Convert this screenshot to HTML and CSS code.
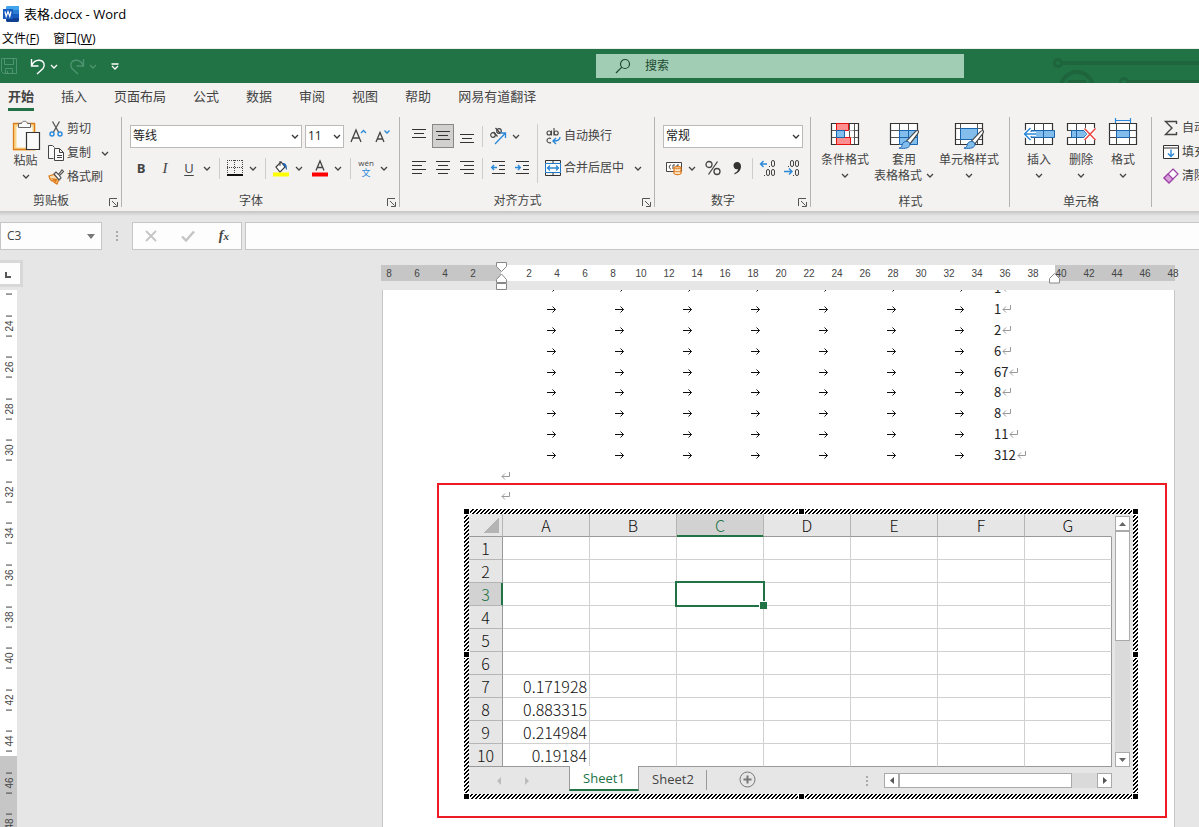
FILE: index.html
```html
<!DOCTYPE html>
<html lang="zh-CN">
<head>
<meta charset="utf-8">
<title>表格.docx - Word</title>
<link rel="stylesheet" href="styles.css">
</head>
<body>
<svg class="defs" aria-hidden="true">
  <symbol id="chev" viewBox="0 0 8 5"><path d="M1 1l3 3 3-3" fill="none" stroke="currentColor" stroke-width="1.3"/></symbol>
  <symbol id="launch" viewBox="0 0 9 9"><path d="M.5 8V.5H8M3 3l4.5 4.5M8.500 4v4.500H4" fill="none" stroke="#555"/></symbol>
  <symbol id="tab" viewBox="0 0 10 8"><path d="M0 4.500h8.500M5.500 1.500l3 3-3 3" fill="none" stroke="#111"/></symbol>
  <symbol id="ret" viewBox="0 0 10 8"><path d="M8.500 0v4.500H1M4 1.500l-3 3 3 3" fill="none" stroke="#999"/></symbol>
  <symbol id="brush" viewBox="0 0 22 22"><path d="M20.500 1c1.500 0 1 2 0 3.500L12.500 15 9 12 18 2.500C19 1.500 19.800 1 20.500 1z" fill="#fff" stroke="#444" stroke-width="1.200"/><path d="M9 12.500c2 0 3.500 1.500 3.500 3 0 3.500-4 5-11.500 4 3-.5 3-2 3.500-4C5 13.500 7 12.500 9 12.500z" fill="#83bdec" stroke="#1a66b0"/></symbol>
</svg>

<header class="titlebar">
  <svg width="16" height="16" viewBox="0 0 16 16"><path fill="#41a5ee" d="M4 0h12v4H3V1z"/><path fill="#2b7cd3" d="M3 4h13v4H3z"/><path fill="#185abd" d="M3 8h13v4H3z"/><path fill="#103f91" d="M3 12h13v3l-1 1H4l-1-1z"/><path fill="#185abd" d="M0 3h10v10H0z"/><path d="M2 5.500l1.200 5 1.800-5 1.800 5 1.200-5" fill="none" stroke="#fff" stroke-width="1.200"/></svg>
  <span>表格.docx - Word</span>
</header>
<nav class="menubar">
  <button>文件(<u>F</u>)</button>
  <button>窗口(<u>W</u>)</button>
</nav>

<div class="topbar">
  <div class="quick">
    <button class="dim" aria-label="保存"><svg width="18" height="18" viewBox="0 0 18 18" fill="none" stroke="currentColor"><path d="M1.500 1.500h15v15h-13l-2-2zM4.500 1.500v6h9v-6M5.500 16.500v-5h7v5M7.500 14v2"/></svg></button>
    <button aria-label="撤消"><svg width="16" height="17" viewBox="0 0 16 17" fill="none" stroke="currentColor" stroke-width="1.400"><path d="M1.500 1v7h7M1.500 8C3 4 6 2 9.500 2.200c4.500.5 6 5 3.500 8.300L7 16"/></svg></button>
    <button aria-label="撤消列表"><svg width="8" height="5"><use href="#chev"/></svg></button>
    <button class="dim redo" aria-label="恢复"><svg width="16" height="17" viewBox="0 0 16 17" fill="none" stroke="currentColor" stroke-width="1.400"><path d="M14.500 1v7h-7M14.500 8C13 4 10 2 6.500 2.200 2 2.700.5 7.200 3 10.500L9 16"/></svg></button>
    <button class="dim" aria-label="恢复列表"><svg width="8" height="5"><use href="#chev"/></svg></button>
    <button class="more" aria-label="自定义"><svg width="8" height="7" viewBox="0 0 8 7" fill="none" stroke="currentColor" stroke-width="1.300"><path d="M.5 1h7M1 3l3 3 3-3"/></svg></button>
  </div>
  <label class="search">
    <svg width="16" height="16" viewBox="0 0 16 16" fill="none" stroke="#1c4a30" stroke-width="1.200"><circle cx="10" cy="6" r="4.500"/><path d="M6.800 9.200L1 15"/></svg>
    <input type="text" placeholder="搜索">
  </label>
  <svg class="circuit" width="235" height="34" viewBox="0 0 235 34" fill="none" stroke="#1e653e"><circle cx="94" cy="14" r="3.500" stroke-width="3"/><path d="M98 14h137M163 33h72" stroke-width="4"/><circle cx="113" cy="39" r="16" stroke-width="4"/><path d="M104 33h18" stroke-width="4"/><circle cx="160" cy="33" r="3.500" stroke-width="3"/></svg>
</div>

<nav class="tabs">
  <button class="on">开始</button><button>插入</button><button>页面布局</button><button>公式</button><button>数据</button><button>审阅</button><button>视图</button><button>帮助</button><button>网易有道翻译</button>
</nav>

<div class="ribbon">
  <section class="group g-clip">
    <div class="body">
      <button class="big">
        <svg width="30" height="32" viewBox="0 0 30 32"><path d="M3.500 5.500h20v25h-20z" fill="#fff"/><path d="M4 5h19v24H4z" fill="#fafafa" stroke="#f8d58a" stroke-width="3"/><path d="M2.500 3.500h21v26h-21z" fill="none" stroke="#e07b1a" stroke-width="1.300"/><path d="M7.500 7.500v-4h3c.5-3 5.500-3 6 0h3v4z" fill="#fafafa" stroke="#666"/><path d="M15.500 12.500h13v17h-13z" fill="#fafafa" stroke="#333" stroke-width="1.200"/></svg>
        <span>粘贴</span><svg class="dd" width="8" height="5"><use href="#chev"/></svg>
      </button>
      <div class="stack">
        <button class="txt"><svg width="16" height="16" viewBox="0 0 16 16" fill="none"><path d="M4.500.500l6 10.500M11.500.500l-6 10.500" stroke="#555" stroke-width="1.300"/><circle cx="4" cy="13" r="2" stroke="#2b88d8" stroke-width="1.400"/><circle cx="12" cy="13" r="2" stroke="#2b88d8" stroke-width="1.400"/></svg>剪切</button>
        <button class="txt"><svg width="16" height="16" viewBox="0 0 16 16" fill="#fafafa" stroke="#444"><path d="M5.500 13.500h-5v-13h4l2 2"/><path d="M6.500 3.500h5l4 4v8h-9zM11.500 3.500v4h4M9 10.500h5M9 12.500h5"/></svg>复制<svg class="far" width="8" height="5"><use href="#chev"/></svg></button>
        <button class="txt"><svg width="16" height="16" viewBox="0 0 16 16"><path d="M1 7l5-1.500L11 10l-2 5c-2-1-3-1.500-4-3-1 0-3-1-4-5z" fill="#fbe0b4" stroke="#e07b1a" stroke-width="1.300"/><path d="M3 9l5 5 1.500-4z" fill="#e07b1a"/><path d="M6 5l2-2 2.500 2.500L14 1l1.500 1.500-4 4L13 9l-2 2z" fill="#fff" stroke="#555" stroke-width="1.200"/></svg>格式刷</button>
      </div>
    </div>
    <footer>剪贴板<button class="launch" aria-label="剪贴板选项"><svg width="9" height="9"><use href="#launch"/></svg></button></footer>
  </section>

  <section class="group g-font">
    <div class="body rows">
      <div class="row fields">
        <select class="face" aria-label="字体"><option>等线</option></select>
        <select class="size" aria-label="字号"><option>11</option></select>
        <button class="ic" aria-label="增大字号"><svg width="18" height="16" viewBox="0 0 18 16" fill="none"><path d="M1 14L6 2l5 12M2.800 10h6.400" stroke="#444" stroke-width="1.300"/><path d="M11 5l2.500-2.500L16 5" stroke="#2b88d8" stroke-width="1.300"/></svg></button>
        <button class="ic" aria-label="减小字号"><svg width="18" height="16" viewBox="0 0 18 16" fill="none"><path d="M2 14L6 4.500 10 14M3.500 11h5" stroke="#444" stroke-width="1.300"/><path d="M10.500 2.500L13 5l2.500-2.500" stroke="#2b88d8" stroke-width="1.300"/></svg></button>
      </div>
      <div class="row">
        <button class="ic b">B</button><button class="ic i">I</button><button class="ic un">U</button><button class="cv" aria-label="下划线"><svg width="8" height="5"><use href="#chev"/></svg></button>
        <i class="sep"></i>
        <button class="ic" aria-label="边框"><svg width="16" height="16" viewBox="0 0 16 16" fill="none" stroke="#444" shape-rendering="crispEdges"><path d="M0 .5h16M.5 0v14M15.500 0v14M0 7.500h16M7.500 0v14" stroke-dasharray="1 1"/><path d="M0 15h16" stroke="#111" stroke-width="2"/></svg></button><button class="cv" aria-label="边框列表"><svg width="8" height="5"><use href="#chev"/></svg></button>
        <i class="sep"></i>
        <button class="ic" aria-label="填充颜色"><svg width="16" height="17" viewBox="0 0 16 17" fill="none"><path d="M3 7l5-5 4 5-5 5z" fill="#fff" stroke="#444" stroke-width="1.200"/><path d="M7 1v5" stroke="#444"/><path d="M10 3c3 0 4 2 4 7-2-1-1-4-4-5z" fill="#1a66b0"/><path d="M0 12.500h16v4H0z" fill="#ff0"/></svg></button><button class="cv" aria-label="填充颜色列表"><svg width="8" height="5"><use href="#chev"/></svg></button>
        <button class="ic gap" aria-label="字体颜色"><svg width="16" height="17" viewBox="0 0 16 17" fill="none"><path d="M4 10.500L8 1l4 9.500M5.300 7.500h5.400" stroke="#444" stroke-width="1.300"/><path d="M0 12.500h16v4H0z" fill="#f00"/></svg></button><button class="cv" aria-label="字体颜色列表"><svg width="8" height="5"><use href="#chev"/></svg></button>
        <i class="sep"></i>
        <button class="ic pinyin"><span>wén</span><b>文</b></button><button class="cv" aria-label="拼音列表"><svg width="8" height="5"><use href="#chev"/></svg></button>
      </div>
    </div>
    <footer>字体<button class="launch" aria-label="字体选项"><svg width="9" height="9"><use href="#launch"/></svg></button></footer>
  </section>

  <section class="group g-align">
    <div class="body">
      <div class="rows">
        <div class="row">
          <button class="ic" aria-label="顶端对齐"><svg width="14" height="14" viewBox="0 0 14 14" stroke="#333"><path d="M0 .5h14M2 4.500h10M0 8.500h14"/></svg></button>
          <button class="ic on" aria-label="垂直居中"><svg width="14" height="14" viewBox="0 0 14 14" stroke="#333"><path d="M0 2.500h14M2 6.500h10M0 10.500h14"/></svg></button>
          <button class="ic" aria-label="底端对齐"><svg width="14" height="14" viewBox="0 0 14 14" stroke="#333"><path d="M0 5.500h14M2 9.500h10M0 13.500h14"/></svg></button>
          <i class="sep even"></i>
          <button class="ic" aria-label="方向"><svg width="18" height="18" viewBox="0 0 18 18" fill="none"><g stroke="#444" stroke-width="1.200"><circle cx="4" cy="8" r="2.300"/><path d="M4.500 5l4 4.500M6.500 1l4.500 5"/><circle cx="10" cy="4" r="2.300"/></g><path d="M6 17L16 6.500M11.500 6h5v5" stroke="#2b88d8" stroke-width="1.300"/></svg></button><button class="cv" aria-label="方向列表"><svg width="8" height="5"><use href="#chev"/></svg></button>
        </div>
        <div class="row">
          <button class="ic" aria-label="左对齐"><svg width="14" height="14" viewBox="0 0 14 14" stroke="#333"><path d="M0 .5h14M0 4.500h10M0 8.500h14M0 12.500h10"/></svg></button>
          <button class="ic" aria-label="居中"><svg width="14" height="14" viewBox="0 0 14 14" stroke="#333"><path d="M0 .5h14M2 4.500h10M0 8.500h14M2 12.500h10"/></svg></button>
          <button class="ic" aria-label="右对齐"><svg width="14" height="14" viewBox="0 0 14 14" stroke="#333"><path d="M0 .5h14M4 4.500h10M0 8.500h14M4 12.500h10"/></svg></button>
          <i class="sep even"></i>
          <button class="ic" aria-label="减少缩进量"><svg width="14" height="14" viewBox="0 0 14 14" fill="none" stroke="#333"><path d="M1 .5h13M8 4.500h6M8 8.500h6M1 12.500h13"/><path d="M6 6.500H.8M3 4L.7 6.500 3 9" stroke="#2b88d8" stroke-width="1.400"/></svg></button>
          <button class="ic" aria-label="增加缩进量"><svg width="14" height="14" viewBox="0 0 14 14" fill="none" stroke="#333"><path d="M1 .5h13M8 4.500h6M8 8.500h6M1 12.500h13"/><path d="M0 6.500h5.200M3 4l2.300 2.500L3 9" stroke="#2b88d8" stroke-width="1.400"/></svg></button>
        </div>
      </div>
      <i class="sep tall"></i>
      <div class="rows">
        <button class="txt"><svg width="16" height="16" viewBox="0 0 16 16" fill="none"><g stroke="#444" stroke-width="1.100"><circle cx="4" cy="5" r="2"/><path d="M6.500 2.500v5M9 0v7.500"/><circle cx="11.200" cy="5" r="2"/><path d="M6 10.500c-1.500-1-4 0-4 2s2.500 3 4 2"/></g><path d="M15 9c0 3-2 4-6.500 4M11 10l-3 3 3 3" stroke="#2b88d8" stroke-width="1.400"/></svg>自动换行</button>
        <button class="txt"><svg width="16" height="16" viewBox="0 0 16 16" fill="none"><path d="M.5 3.500v-3h15v3M8 .5v3M.5 12.500v3h15v-3M8 12.500v3" stroke="#333"/><path d="M.5 3.500h15v9H.5z" fill="#fff" stroke="#1e78c8"/><path d="M3 8h10M5 5.500L2.500 8 5 10.500M11 5.500L13.500 8 11 10.500" stroke="#2b88d8" stroke-width="1.300"/></svg>合并后居中<svg class="far" width="8" height="5"><use href="#chev"/></svg></button>
      </div>
    </div>
    <footer>对齐方式<button class="launch" aria-label="对齐选项"><svg width="9" height="9"><use href="#launch"/></svg></button></footer>
  </section>

  <section class="group g-num">
    <div class="body rows">
      <div class="row"><select class="fmt" aria-label="数字格式"><option>常规</option></select></div>
      <div class="row">
        <button class="ic" aria-label="会计数字格式"><svg width="16" height="16" viewBox="0 0 16 16" fill="none"><path d="M.5 2.500h15v9H.5z" fill="#fff" stroke="#444"/><path d="M5 5c-2-.5-2.500 4 0 4M7 9V5h2M11 7V5h2" stroke="#444"/><path d="M8 7.500c1-1.300 6-1.300 7 0v6c-1 1.500-6 1.500-7 0z" fill="#fde6c8" stroke="#e07b1a" stroke-width="1.200"/><path d="M8 8c1 1 6 1 7 0M8 11c1 1 6 1 7 0" stroke="#e07b1a"/></svg></button><button class="cv" aria-label="会计格式列表"><svg width="8" height="5"><use href="#chev"/></svg></button>
        <button class="ic gap" aria-label="百分比样式"><svg width="16" height="16" viewBox="0 0 16 16" fill="none" stroke="#444" stroke-width="1.300"><circle cx="4" cy="4.500" r="3"/><circle cx="12" cy="11.500" r="3"/><path d="M12.500 1.500l-9 13"/></svg></button>
        <button class="ic" aria-label="千位分隔样式"><svg width="10" height="14" viewBox="0 0 10 14"><path d="M5 1c2.500 0 4 1.500 4 4.500C9 9 6.500 12 2.500 13.500V12C5 11 6 9.500 6 8 3 9 1.500 6.500 1.500 4.500 1.500 2.500 3 1 5 1z" fill="#333"/></svg></button>
        <i class="sep even"></i>
        <button class="ic dec" aria-label="增加小数位数"><svg width="18" height="18" viewBox="0 0 18 18" fill="none" stroke="#444"><path d="M8 5H1.500M4.500 2l-3 3 3 3" stroke="#2b88d8" stroke-width="1.400"/><rect x="12.500" y="1.500" width="3" height="6" rx="1.500"/><rect x="7.500" y="10.500" width="3" height="6" rx="1.500"/><rect x="12.500" y="10.500" width="3" height="6" rx="1.500"/><path d="M10 7.500h1M5 16.500h1"/></svg></button>
        <button class="ic dec" aria-label="减少小数位数"><svg width="18" height="18" viewBox="0 0 18 18" fill="none" stroke="#444"><path d="M1 12.500h8M6 9.500l3 3-3 3" stroke="#2b88d8" stroke-width="1.400"/><rect x="7.500" y="1.500" width="3" height="6" rx="1.500"/><rect x="12.500" y="1.500" width="3" height="6" rx="1.500"/><rect x="12.500" y="10.500" width="3" height="6" rx="1.500"/><path d="M5 7.500h1M10 16.500h1"/></svg></button>
      </div>
    </div>
    <footer>数字<button class="launch" aria-label="数字选项"><svg width="9" height="9"><use href="#launch"/></svg></button></footer>
  </section>

  <section class="group g-style">
    <div class="body">
      <button class="big"><svg width="32" height="32" viewBox="0 0 32 32" fill="none"><path d="M2.500 4.500h27v21h-27z" fill="#fff"/><path d="M2.500 11.500h27M2.500 18.500h27M7.500 4v21M20.500 4v21M25.500 4v21" stroke="#555"/><path d="M2.500 4.500h27v21h-27z" stroke="#333" stroke-width="1.200"/><path d="M15.500 11.500h9v7h-9z" fill="#fff"/><path d="M20.500 12v6" stroke="#555"/><path d="M7.500 4.500h12v7h-12zM7.500 18.500h14v7h-14z" fill="#ff8f8f" stroke="#e81010"/><path d="M7.500 11.500h8v7h-8z" fill="#83bdec" stroke="#1a66b0"/></svg><span>条件格式</span><svg class="dd" width="8" height="5"><use href="#chev"/></svg></button>
      <button class="big"><svg width="32" height="32" viewBox="0 0 32 32" fill="none"><path d="M2.500 4.500h27v21h-27z" fill="#fff"/><path d="M11.500 11.500h18v14h-18z" fill="#83bdec"/><path d="M2.500 11.500h27M2.500 18.500h9M11.500 4v21M20.500 4v8" stroke="#555"/><path d="M29.500 12V4.500h-27v21h9" stroke="#333" stroke-width="1.200"/><path d="M11.500 25.500v-14h18v14zM11.500 18.500h18M20.500 11.500v14" stroke="#1a66b0"/><use href="#brush" x="9.500" y="10.500" width="22" height="21"/></svg><span>套用</span><span class="with-dd">表格格式<svg width="8" height="5"><use href="#chev"/></svg></span></button>
      <button class="big"><svg width="32" height="32" viewBox="0 0 32 32" fill="none"><path d="M2.500 4.500h27v21h-27z" fill="#fff"/><path d="M2.500 9.500h27M2.500 20.500h27M7.500 4v21M24.500 4v21" stroke="#555"/><path d="M2.500 4.500h27v21h-27z" stroke="#333" stroke-width="1.200"/><path d="M7.500 9.500h17v11h-17z" fill="#83bdec" stroke="#1a66b0"/><use href="#brush" x="9.500" y="10.500" width="22" height="21"/></svg><span>单元格样式</span><svg class="dd" width="8" height="5"><use href="#chev"/></svg></button>
    </div>
    <footer>样式</footer>
  </section>

  <section class="group g-cell">
    <div class="body">
      <button class="big"><svg width="32" height="32" viewBox="0 0 32 32" fill="none"><path d="M2.500 4.500h27v21h-27z" fill="#fff" stroke="#333" stroke-width="1.200"/><path d="M11.500 4v21M20.500 4v21M2 11.500h28M2 18.500h28" stroke="#444"/><path d="M8 11.500h23.500v7H8z" fill="#83bdec" stroke="#1a66b0"/><path d="M20.500 11.500v7" stroke="#1a66b0"/><path d="M13 15H2M8 8.500L1.500 15 8 21.500" stroke="#fff" stroke-width="4"/><path d="M13 15H2M7.500 9l-6 6 6 6" stroke="#2b88d8" stroke-width="1.500"/></svg><span>插入</span><svg class="dd" width="8" height="5"><use href="#chev"/></svg></button>
      <button class="big"><svg width="32" height="32" viewBox="0 0 32 32" fill="none"><path d="M2.500 11.500v-7h27v7M2.500 18.500v7h27v-7" fill="#fff" stroke="#333" stroke-width="1.200"/><path d="M11.500 4v7M20.500 4v7M2 11.500h18M2 18.500h18M11.500 19v6M20.500 19v6" stroke="#444"/><path d="M6.500 11.500h12l4 3.500-4 3.500h-12z" fill="#83bdec" stroke="#1a66b0"/><path d="M11.500 11.500v7" stroke="#1a66b0"/><path d="M20 9.500l10 11M30 9.500l-10 11" stroke="#fff" stroke-width="4"/><path d="M19.500 9.500l11 11.500M30.500 9.500L19.500 21" stroke="#e8433f" stroke-width="1.400"/></svg><span>删除</span><svg class="dd" width="8" height="5"><use href="#chev"/></svg></button>
      <button class="big"><svg width="32" height="32" viewBox="0 0 32 32" fill="none"><path d="M8.500 1.500h15M8.500-1v5M23.500-1v5" stroke="#2b88d8" stroke-width="1.200"/><path d="M2.500 4.500h27v21h-27z" fill="#fff" stroke="#333" stroke-width="1.200"/><path d="M9.500 4v21M22.500 4v21M2 11.500h28M2 18.500h28" stroke="#444"/><path d="M9.500 11.500h13v7h-13z" fill="#83bdec" stroke="#1a66b0"/></svg><span>格式</span><svg class="dd" width="8" height="5"><use href="#chev"/></svg></button>
    </div>
    <footer>单元格</footer>
  </section>

  <section class="group g-edit">
    <div class="body">
      <div class="stack">
        <button class="txt"><svg width="16" height="16" viewBox="0 0 16 16" fill="none" stroke="#444" stroke-width="1.400"><path d="M13.500 4V1.500h-11L9 8l-6.500 6.500h11V12"/></svg>自动</button>
        <button class="txt"><svg width="16" height="16" viewBox="0 0 16 16" fill="none"><path d="M.5 1.500h15v13H.5zM.5 4h15" fill="#fff" stroke="#333"/><path d="M8 5.500v7M5 9.500l3 3 3-3" stroke="#2b88d8" stroke-width="1.400"/></svg>填充</button>
        <button class="txt"><svg width="16" height="16" viewBox="0 0 16 16"><path d="M10 1l5 5-9 9-5-5z" fill="#fff" stroke="#9b3fa5" stroke-width="1.200"/><path d="M5 6l5 5-4 4-5-5z" fill="#d9a0dc" stroke="#9b3fa5" stroke-width="1.200"/></svg>清除</button>
      </div>
    </div>
  </section>
</div>

<div class="formula">
  <div class="namebox"><input type="text" value="C3" aria-label="名称框"><svg width="8" height="5" viewBox="0 0 8 5"><path d="M0 0h8L4 5z" fill="#777"/></svg></div>
  <span class="dots"></span>
  <div class="fx">
    <button aria-label="取消"><svg width="12" height="12" viewBox="0 0 12 12"><path d="M1 1l10 10M11 1L1 11" stroke="#c4c4c4" stroke-width="1.800"/></svg></button>
    <button aria-label="输入"><svg width="14" height="12" viewBox="0 0 14 12" fill="none"><path d="M1 6.500L5 10.500 13 1.500" stroke="#c4c4c4" stroke-width="2.400"/></svg></button>
    <button class="fn"><i>f</i><sub>x</sub></button>
  </div>
  <input class="entry" type="text" aria-label="编辑栏">
</div>

<main class="work">
  <div class="rulerrow">
    <button class="corner" aria-label="制表符"><svg width="6" height="6" viewBox="0 0 6 6"><path d="M1 0v5h5" fill="none" stroke="#555" stroke-width="2"/></svg></button>
    <div class="hruler">
      <div class="nums"><span>8</span><span>6</span><span>4</span><span>2</span><span></span><span>2</span><span>4</span><span>6</span><span>8</span><span>10</span><span>12</span><span>14</span><span>16</span><span>18</span><span>20</span><span>22</span><span>24</span><span>26</span><span>28</span><span>30</span><span>32</span><span>34</span><span>36</span><span>38</span><span>40</span><span>42</span><span>44</span><span>46</span><span>48</span></div>
      <svg class="mark left" width="12" height="28" viewBox="0 0 12 28" fill="#fff" stroke="#888"><path d="M.5.5h10v4l-5 5-5-5zM.5 20.500v-3l5-5.500 5 5.500v3zM.5 21.500h10v6H.5z"/></svg>
      <svg class="mark right" width="12" height="11" viewBox="0 0 12 11" fill="#fff" stroke="#888"><path d="M.5 10v-4.500l5-5 5 5V10z"/></svg>
    </div>
  </div>
  <div class="canvas">
    <div class="vruler">
      <div class="vnums"><span></span><span>24</span><span>26</span><span>28</span><span>30</span><span>32</span><span>34</span><span>36</span><span>38</span><span>40</span><span>42</span><span>44</span><span>46</span><span>48</span></div>
    </div>
    <article class="page">
      <div class="lines">
        <p><svg><use href="#tab"/></svg><svg><use href="#tab"/></svg><svg><use href="#tab"/></svg><svg><use href="#tab"/></svg><svg><use href="#tab"/></svg><svg><use href="#tab"/></svg><svg><use href="#tab"/></svg><span>1</span><svg class="ret"><use href="#ret"/></svg></p>
        <p><svg><use href="#tab"/></svg><svg><use href="#tab"/></svg><svg><use href="#tab"/></svg><svg><use href="#tab"/></svg><svg><use href="#tab"/></svg><svg><use href="#tab"/></svg><svg><use href="#tab"/></svg><span>1</span><svg class="ret"><use href="#ret"/></svg></p>
        <p><svg><use href="#tab"/></svg><svg><use href="#tab"/></svg><svg><use href="#tab"/></svg><svg><use href="#tab"/></svg><svg><use href="#tab"/></svg><svg><use href="#tab"/></svg><svg><use href="#tab"/></svg><span>2</span><svg class="ret"><use href="#ret"/></svg></p>
        <p><svg><use href="#tab"/></svg><svg><use href="#tab"/></svg><svg><use href="#tab"/></svg><svg><use href="#tab"/></svg><svg><use href="#tab"/></svg><svg><use href="#tab"/></svg><svg><use href="#tab"/></svg><span>6</span><svg class="ret"><use href="#ret"/></svg></p>
        <p><svg><use href="#tab"/></svg><svg><use href="#tab"/></svg><svg><use href="#tab"/></svg><svg><use href="#tab"/></svg><svg><use href="#tab"/></svg><svg><use href="#tab"/></svg><svg><use href="#tab"/></svg><span>67</span><svg class="ret"><use href="#ret"/></svg></p>
        <p><svg><use href="#tab"/></svg><svg><use href="#tab"/></svg><svg><use href="#tab"/></svg><svg><use href="#tab"/></svg><svg><use href="#tab"/></svg><svg><use href="#tab"/></svg><svg><use href="#tab"/></svg><span>8</span><svg class="ret"><use href="#ret"/></svg></p>
        <p><svg><use href="#tab"/></svg><svg><use href="#tab"/></svg><svg><use href="#tab"/></svg><svg><use href="#tab"/></svg><svg><use href="#tab"/></svg><svg><use href="#tab"/></svg><svg><use href="#tab"/></svg><span>8</span><svg class="ret"><use href="#ret"/></svg></p>
        <p><svg><use href="#tab"/></svg><svg><use href="#tab"/></svg><svg><use href="#tab"/></svg><svg><use href="#tab"/></svg><svg><use href="#tab"/></svg><svg><use href="#tab"/></svg><svg><use href="#tab"/></svg><span>11</span><svg class="ret"><use href="#ret"/></svg></p>
        <p><svg><use href="#tab"/></svg><svg><use href="#tab"/></svg><svg><use href="#tab"/></svg><svg><use href="#tab"/></svg><svg><use href="#tab"/></svg><svg><use href="#tab"/></svg><svg><use href="#tab"/></svg><span>312</span><svg class="ret"><use href="#ret"/></svg></p>
        <p class="blank"><svg class="ret"><use href="#ret"/></svg></p>
      </div>
      <section class="callout">
        <p><svg class="ret"><use href="#ret"/></svg></p>
        <div class="object">
          <i class="h tl"></i><i class="h tm"></i><i class="h tr"></i><i class="h ml"></i><i class="h mr"></i><i class="h bl"></i><i class="h bm"></i><i class="h br"></i>
          <div class="sheet">
            <div class="upper">
              <table>
                <thead><tr><th class="all"></th><th>A</th><th>B</th><th class="cur">C</th><th>D</th><th>E</th><th>F</th><th>G</th></tr></thead>
                <tbody>
                  <tr><th>1</th><td></td><td></td><td></td><td></td><td></td><td></td><td></td></tr>
                  <tr><th>2</th><td></td><td></td><td></td><td></td><td></td><td></td><td></td></tr>
                  <tr><th class="cur">3</th><td></td><td></td><td class="sel"></td><td></td><td></td><td></td><td></td></tr>
                  <tr><th>4</th><td></td><td></td><td></td><td></td><td></td><td></td><td></td></tr>
                  <tr><th>5</th><td></td><td></td><td></td><td></td><td></td><td></td><td></td></tr>
                  <tr><th>6</th><td></td><td></td><td></td><td></td><td></td><td></td><td></td></tr>
                  <tr><th>7</th><td>0.171928</td><td></td><td></td><td></td><td></td><td></td><td></td></tr>
                  <tr><th>8</th><td>0.883315</td><td></td><td></td><td></td><td></td><td></td><td></td></tr>
                  <tr><th>9</th><td>0.214984</td><td></td><td></td><td></td><td></td><td></td><td></td></tr>
                  <tr><th>10</th><td>0.19184</td><td></td><td></td><td></td><td></td><td></td><td></td></tr>
                </tbody>
              </table>
              <div class="vscroll">
                <button aria-label="向上"><svg width="7" height="4"><path d="M0 4h7L3.500 0z" fill="#666"/></svg></button>
                <span class="thumb"></span>
                <button class="end" aria-label="向下"><svg width="7" height="4"><path d="M0 0h7L3.500 4z" fill="#666"/></svg></button>
              </div>
            </div>
            <div class="lower">
              <button class="nav" aria-label="上一个"><svg width="4" height="8"><path d="M4 0v8L0 4z" fill="#bbb"/></svg></button>
              <button class="nav" aria-label="下一个"><svg width="4" height="8"><path d="M0 0v8l4-4z" fill="#bbb"/></svg></button>
              <button class="st on">Sheet1</button>
              <button class="st">Sheet2</button>
              <button class="add" aria-label="新工作表"><svg width="17" height="17" viewBox="0 0 17 17" fill="none" stroke="#777"><circle cx="8.500" cy="8.500" r="7.500"/><path d="M8.500 4.500v8M4.500 8.500h8" stroke-width="2"/></svg></button>
              <span class="dots"></span>
              <div class="hscroll">
                <button aria-label="向左"><svg width="4" height="7"><path d="M4 0v7L0 3.500z" fill="#555"/></svg></button>
                <span class="thumb"></span>
                <button class="end" aria-label="向右"><svg width="4" height="7"><path d="M0 0v7l4-3.500z" fill="#555"/></svg></button>
              </div>
            </div>
          </div>
        </div>
      </section>
    </article>
  </div>
</main>
</body>
</html>
```
FILE: styles.css
```css
* { box-sizing: border-box; }
body {
  margin: 0;
  height: 100vh;
  display: flex;
  flex-direction: column;
  overflow: hidden;
  background: #e6e6e6;
  color: #444;
  font: 12px/16px "Open Sans", "Noto Sans CJK SC", sans-serif;
}
button, input, select { font: inherit; color: inherit; margin: 0; }
button { border: 0; padding: 0; background: none; white-space: nowrap; }
svg { display: block; flex: none; overflow: visible; }
p { margin: 0; }
.defs { position: absolute; width: 0; height: 0; }

.titlebar { display: flex; align-items: center; gap: 5px; height: 28px; flex: none; padding: 0 3px; background: #fff; color: #000; font-size: 13px; }
.menubar { display: flex; gap: 14px; height: 21px; flex: none; padding: 2px 2px 0; background: #fff; color: #000; border-bottom: 1px solid #eee; }

.topbar { display: grid; grid-template-columns: 1fr minmax(200px, 368px) 235px; align-items: center; height: 34px; flex: none; background: #217346; overflow: hidden; }
.quick { display: flex; align-items: center; color: #fff; }
.quick button { margin-right: 4px; }
.quick button:first-child { margin-right: 12px; }
.quick .redo { margin-left: 7px; }
.quick .dim { color: #4f9470; }
.quick .more { margin-left: 10px; }
.search { display: flex; align-items: center; height: 24px; padding: 0 19px; gap: 14px; background: #a0cdb4; }
.search input { flex: 1; min-width: 0; border: 0; padding: 0; background: none; outline: 0; }
.search input::placeholder { color: #1c4a30; opacity: 1; }

.tabs { display: flex; gap: 27px; height: 29px; flex: none; padding: 0 8px; background: #f3f2f1; font-size: 13px; }
.tabs button { border-bottom: 3px solid transparent; height: 28px; padding-top: 1px; }
.tabs .on { font-weight: 700; border-color: #217346; }

.ribbon { display: flex; height: 99px; flex: none; overflow: hidden; background: #f3f2f1; }
.group { display: flex; flex-direction: column; flex: none; position: relative; }
.group:not(:last-child)::after { content: ""; position: absolute; right: 0; top: 5px; bottom: 4px; width: 1px; background: #b5b3b1; }
.body { display: flex; flex: 1; }
.group footer { height: 21px; text-align: center; line-height: 21px; padding-right: 20px; }
.g-style footer, .g-cell footer { padding-right: 0; }
.launch { position: absolute; right: 4px; bottom: 4px; }
.g-clip { width: 122px; }
.g-font { width: 278px; }
.g-align { width: 255px; }
.g-num { width: 156px; }
.g-style { width: 199px; }
.g-cell { width: 142px; }
.g-clip .body { padding: 5px 0 0 7px; }
.g-font .body, .g-num .body { padding: 12px 0 0 7px; }
.g-align .body { padding: 12px 0 0 7px; }
.g-style .body { padding: 7px 0 0 6px; }
.g-cell .body { padding: 7px 0 0 9px; gap: 2px; }
.g-edit .body { padding: 4px 0 0 7px; }
.rows { display: flex; flex-direction: column; gap: 8px; }
.row { display: flex; align-items: center; height: 24px; }
.stack { display: flex; flex-direction: column; }
.stack .txt { height: 24px; }
.txt { display: flex; align-items: center; gap: 3px; height: 24px; padding: 0 4px; }
.txt .far { margin-left: 7px; }
.ic { display: flex; align-items: center; justify-content: center; width: 24px; height: 24px; flex: none; }
.ic.on { width: 22px; margin: 0 1px; border: 1px solid #8a8886; background: #d2d0ce; }
.cv { display: flex; align-items: center; justify-content: center; width: 12px; height: 24px; flex: none; }
.gap { margin-left: 3px; }
.sep { width: 1px; height: 21px; margin: 0 3px 0 6px; background: #cfcdcb; flex: none; }
.sep.even { margin: 0 3px; }
.sep.tall { height: 59px; margin: 0 3px; }
.g-clip .big { width: 37px; }
.g-style .big { width: 56px; }
.g-style .big:nth-child(2) { width: 62px; }
.g-style .big:nth-child(3) { width: 68px; }
.g-cell .big { width: 40px; }
.big { display: flex; flex-direction: column; align-items: center; height: 72px; flex: none; }
.big span { line-height: 16px; }
.big svg:first-child { margin-bottom: 1px; }
.g-clip .big { padding-top: 3px; }
.big .dd { margin-top: 5px; }
.with-dd { display: flex; align-items: center; gap: 4px; }
.b { font-weight: 700; font-size: 13px; }
.i { font: italic 15px "Liberation Serif", serif; }
.un { text-decoration: underline; font-size: 13px; text-underline-offset: 2px; }
.pinyin { flex-direction: column; font-size: 8px; line-height: 10px; }
.pinyin b { font-weight: 400; color: #2b88d8; line-height: 10px; font-size: 9px; }

select {
  appearance: none;
  height: 23px;
  padding: 0 2px;
  border: 1px solid #bcbab8;
  border-radius: 0;
  color: #222;
  background: #fff url("data:image/svg+xml,%3Csvg xmlns='http://www.w3.org/2000/svg' width='8' height='5'%3E%3Cpath d='M1 1l3 3 3-3' fill='none' stroke='%23333' stroke-width='1.300'/%3E%3C/svg%3E") no-repeat right 2px center;
}
.face { width: 172px; margin-left: 1px; }
.size { width: 39px; margin: 0 3px; }
.fmt { width: 140px; margin-left: 1px; }

.formula { display: flex; height: 39px; flex: none; padding-top: 11px; background: linear-gradient(#c4c4c4, #e6e6e6 5px); }
.namebox { display: flex; align-items: center; width: 102px; padding: 0 6px; border: 1px solid #c6c6c6; background: #fdfdfd; }
.namebox input { width: 100%; border: 0; padding: 0; background: none; }
.dots { width: 2px; height: 10px; background: repeating-linear-gradient(#aaa 0 2px, transparent 2px 4px); flex: none; }
.formula .dots { align-self: center; margin: 0 14px; }
.fx { display: flex; align-items: center; justify-content: space-between; width: 110px; padding: 0 12px; border: 1px solid #c6c6c6; background: #fdfdfd; }
.fn { font: 700 14px/16px "Liberation Serif", serif; }
.fn sub { font: italic 700 11px/8px "Liberation Serif", serif; vertical-align: baseline; }
.entry { flex: 1; min-width: 0; margin-left: 3px; border: 1px solid #c6c6c6; border-right: 0; background: #fdfdfd; }

.work { flex: 1; min-height: 0; display: flex; flex-direction: column; overflow: hidden; }
.rulerrow { display: flex; justify-content: space-between; align-items: flex-start; height: 40px; flex: none; padding-top: 10px; }
.corner { display: flex; align-items: center; justify-content: center; width: 23px; height: 27px; padding: 3px 4px 0 0; border: 3px solid #d8d8d8; border-left: 0; background: #fdfdfd; flex: none; }
.hruler { position: relative; width: 794px; height: 16px; margin: 5px 24px 0 0; background: linear-gradient(90deg, #c6c6c6 120px, #fff 120px 674px, #c6c6c6 674px); }
.nums { display: flex; margin-left: -6px; font: 10px/17px "Liberation Sans", sans-serif; }
.nums span { width: 28px; text-align: center; flex: none; }
.mark { position: absolute; }
.mark.left { left: 115px; top: -3px; }
.mark.right { left: 668px; top: 8px; }
.canvas { display: flex; justify-content: space-between; flex: 1; min-height: 0; }
.vruler { width: 17px; overflow: hidden; background: linear-gradient(#fff 466px, #c6c6c6 466px); flex: none; }
.vnums { display: grid; grid-template-rows: repeat(14, 1fr); height: 582px; margin-top: -27px; padding-left: 2px; font: 10px/14px "Liberation Sans", sans-serif; }
.vnums span {
  display: flex;
  align-items: center;
  justify-content: center;
  width: 15px;
  writing-mode: vertical-rl;
  transform: rotate(180deg);
  background:
    linear-gradient(#444, #444) 50% calc(50% - 10px) / 6px 1px no-repeat,
    linear-gradient(#444, #444) 50% calc(50% + 10px) / 6px 1px no-repeat;
}

.page { width: 793px; margin-right: 24px; overflow: hidden; border: solid #c6c6c6; border-width: 0 1px; background: #fff; color: #222; }
.lines { display: grid; grid-template-rows: repeat(10, 1fr); height: 208px; margin-top: -12px; padding-left: 135px; font: 13px/20px "Noto Sans CJK SC", sans-serif; }
.lines p { display: flex; align-items: center; }
.lines svg { width: 10px; height: 8px; margin: 0 29px; }
.lines .ret { margin: 0 0 0 1px; }
.lines .blank { margin-left: -18px; }
.callout { margin: -3px 7px 0 54px; border: 2px solid #ed1c24; padding: 7px 27px 17px 25px; }
.callout p { height: 17px; padding-left: 37px; }
.callout .ret { width: 10px; height: 8px; }

.object { position: relative; padding: 5px; background: linear-gradient(135deg, #000 25%, #fff 25% 50%, #000 50% 75%, #fff 75%) 0 0 / 4px 4px; }
.h { position: absolute; width: 7px; height: 7px; border: 1px solid #fff; background: #000; }
.tl, .tm, .tr { top: -1px; }
.bl, .bm, .br { bottom: -1px; }
.ml, .mr { top: calc(50% - 3px); }
.tl, .ml, .bl { left: -1px; }
.tr, .mr, .br { right: -1px; }
.tm, .bm { left: calc(50% - 3px); }
.sheet { background: #e6e6e6; }
.upper { display: flex; padding-right: 3px; gap: 3px; }
table { width: 100%; flex: 1; table-layout: fixed; border-collapse: separate; border-spacing: 0; color: #111; font: 300 16px/22px "Noto Sans CJK SC", sans-serif; }
th, td { height: 23px; padding: 0 2px; border: solid #d0d0d0; border-width: 0 1px 1px 0; background: #fff; text-align: right; line-height: 22px; }
th { border-color: #b5b5b5; background: #e6e6e6; font-weight: 300; text-align: center; }
thead th { border-bottom-color: #999; }
tbody th { border-right-color: #999; }
th:first-child { width: 34px; }
th:last-child { border-right-color: #e6e6e6; }
tbody th:first-child { border-right-color: #999; }
td:last-child { border-right-color: #999; }
tbody tr:last-child > * { border-bottom-color: #999; }
.all { background: linear-gradient(135deg, transparent 50%, #b4b4b4 50%) 15px 4px / 15px 15px no-repeat #e6e6e6; }
th.cur { background: #d2d2d2; color: #217346; }
thead .cur { box-shadow: inset 0 -1px #217346; border-bottom-color: #217346; }
tbody th.cur:first-child { box-shadow: inset -1px 0 #217346; border-right-color: #217346; }
.sel { position: relative; }
.sel::before { content: ""; position: absolute; inset: -2px; border: 2px solid #217346; }
.sel::after { content: ""; position: absolute; right: -4px; bottom: -4px; width: 7px; height: 7px; border: solid #fff; border-width: 1px 0 0 1px; background: #217346; }
.vscroll { display: flex; flex-direction: column; width: 15px; flex: none; margin-top: 2px; background: #dadada; }
.vscroll button, .hscroll button { display: flex; align-items: center; justify-content: center; width: 15px; height: 15px; border: 1px solid #aaa; background: #fff; flex: none; }
.thumb { border: 1px solid #aaa; background: #fff; }
.vscroll .thumb { height: 110px; }
.vscroll .end { margin-top: auto; }
.lower { display: flex; height: 27px; padding-right: 21px; }
.nav { width: 28px; display: flex; align-items: center; justify-content: center; }
.nav:first-child { margin-left: 16px; }
.nav:nth-child(2) { margin-right: 28px; }
.st { position: relative; width: 68px; height: 24px; font-size: 13px; color: #444; }
.st.on { width: 70px; height: 25px; margin-top: -1px; border: solid #999; border-width: 0 1px; border-bottom: 2px solid #217346; background: #fff; color: #217346; }
.st:not(.on)::after { content: ""; position: absolute; right: 0; top: 3px; height: 20px; width: 1px; background: #999; }
.add { margin-left: 32px; height: 25px; }
.lower .dots { margin: 9px 16px 0 auto; }
.hscroll { display: flex; width: 228px; height: 15px; margin-top: 6px; background: #dadada; }
.hscroll .thumb { width: 173px; }
.hscroll .end { margin-left: auto; }
```
